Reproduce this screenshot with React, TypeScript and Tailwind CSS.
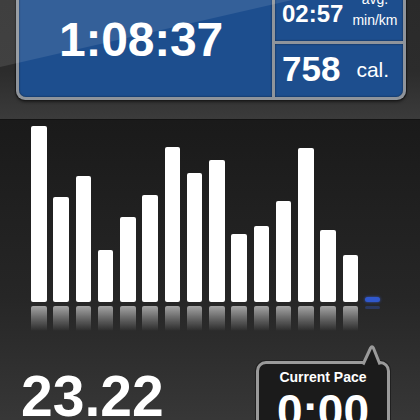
import React from "react";

const tops = [127, 198, 177, 251, 218, 196, 148, 174, 161, 235, 227, 202, 149, 231, 256];
const heights = tops.map((t) => 303 - t);

export default function App() {
  return (
    <div className="w-[420px] h-[420px] overflow-hidden flex flex-col font-['Liberation_Sans',Arial,sans-serif] text-white">
      {/* Top stats section */}
      <div className="relative h-[120px] shrink-0 bg-[linear-gradient(to_bottom,#2a2a2a,#2c2c2c_60%,#3b3b3b)] border-b border-[#141414]">
        <div className="mt-[-40px] ml-[16px] w-[390px] h-[140px] grid grid-cols-[253px_128px] grid-rows-[78px_53px] gap-[3px] p-[3px] rounded-[9px] bg-[#8f949b] shadow-[0_0_0_1px_#1a1a1a,0_2px_3px_rgba(0,0,0,0.5)]">
          <div className="row-span-2 bg-[#1d4e8e] rounded-bl-[7px] flex flex-col justify-end pl-[40px] pb-[33px] shadow-[inset_0_0_2px_rgba(0,0,0,0.6)]">
            <div className="text-[48px] font-bold leading-none tracking-[-0.2px]">1:08:37</div>
          </div>
          <div className="bg-[#1d4e8e] flex items-end pl-[7px] pb-[14px] shadow-[inset_0_0_2px_rgba(0,0,0,0.6)]">
            <div className="text-[24px] font-bold leading-none mb-[1.5px]">02:57</div>
            <div className="ml-[9px] flex flex-col items-center gap-[7px] text-[14px] leading-none">
              <div>avg.</div>
              <div>min/km</div>
            </div>
          </div>
          <div className="bg-[#1d4e8e] rounded-br-[7px] flex items-end pl-[7px] pb-[11px] shadow-[inset_0_0_2px_rgba(0,0,0,0.6)]">
            <div className="text-[35px] font-bold leading-none">758</div>
            <div className="ml-[16px] mb-[6px] text-[21px] leading-none">cal.</div>
          </div>
        </div>
        <div className="pointer-events-none absolute inset-0 bg-white/[0.1] [clip-path:polygon(0_0,292px_0,0_67px)]" />
      </div>

      {/* Chart + bottom */}
      <div className="flex-1 flex flex-col bg-[linear-gradient(to_bottom,#1a1a1a,#262626_55%,#3a3a3a)]">
        <div className="h-[182px] flex items-end pl-[31px] gap-[6.76px]">
          {heights.map((h, i) => (
            <div key={i} className="w-[15.5px] rounded-[2px] bg-white" style={{ height: h }} />
          ))}
          <div className="w-[15.5px] h-[5px] rounded-full bg-[#3058cc] shadow-[0_0_3px_rgba(60,100,230,0.8)]" />
        </div>
        <div className="mt-[4px] h-[25px] flex items-start pl-[31px] gap-[6.76px]">
          {heights.map((_, i) => (
            <div
              key={i}
              className="w-[15.5px] h-[25px] rounded-t-[2px] bg-[linear-gradient(to_bottom,rgba(255,255,255,0.58),rgba(255,255,255,0.25)_55%,rgba(255,255,255,0))]"
            />
          ))}
          <div className="w-[15.5px] h-[3px] rounded-full bg-[rgba(48,88,204,0.35)]" />
        </div>

        <div className="flex justify-between items-start">
          <div className="ml-[21px] mt-[37px] text-[57px] font-bold leading-none">23.22</div>
          <div className="relative mt-[30px] mr-[30px] w-[134px] h-[80px] rounded-[10px] border-[3px] border-[#9a9a9a] bg-[#1b1b1b] shadow-[0_0_0_1px_#202020] flex flex-col items-center pt-[6px]">
            <svg
              className="absolute left-[101px] top-[-21px]"
              width="24"
              height="23"
              viewBox="0 0 24 23"
            >
              <path
                d="M3 21.5 L10.6 5 Q12 2.4 13.4 5 L20 21.5"
                fill="#1b1b1b"
                stroke="#9a9a9a"
                strokeWidth="3"
                strokeLinejoin="round"
              />
            </svg>
            <div className="relative text-[14px] font-bold leading-none">Current Pace</div>
            <div className="relative mt-[4px] text-[46px] font-bold leading-none">0:00</div>
          </div>
        </div>
      </div>
    </div>
  );
}
